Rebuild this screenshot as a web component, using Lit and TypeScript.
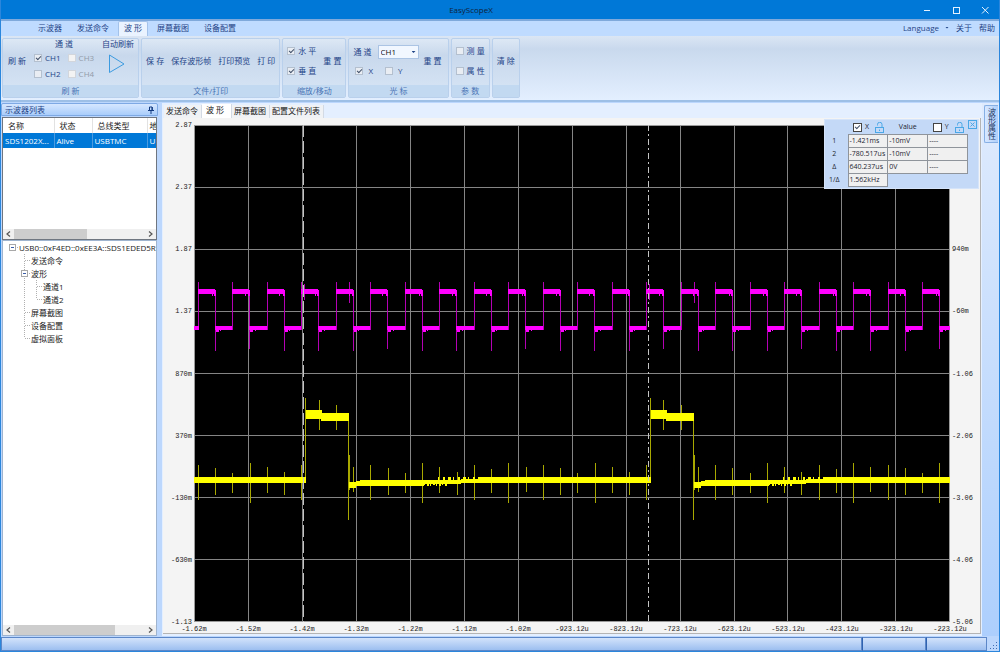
import { LitElement, html, svg, css } from "lit";
import { customElement, state } from "lit/decorators.js";
import { classMap } from "lit/directives/class-map.js";

const UI_FONT = css`"Open Sans", "Noto Sans CJK SC", sans-serif`;

const checkStyles = css`
  input[type="checkbox"] {
    appearance: none;
    flex: none;
    box-sizing: border-box;
    width: 8px;
    height: 8px;
    margin: 0;
    border: 1px solid #b4c0cf;
    background: #e9edf3;
    display: grid;
    place-items: center;
  }
  input[type="checkbox"]:checked::before {
    content: "";
    width: 4px;
    height: 2px;
    border: solid #44536b;
    border-width: 0 0 1px 1px;
    transform: translateY(-1px) rotate(-45deg);
  }
  input[type="checkbox"]:disabled {
    background: #f3f3f3;
    border-color: #d2d6dc;
  }
`;

/* ---------- Title bar ---------- */
@customElement("title-bar")
class TitleBar extends LitElement {
  static styles = css`
    :host {
      display: grid;
      grid-template-columns: 1fr auto 1fr;
      align-items: center;
      height: 19px;
      background: #0078d7;
      border-bottom: 2px solid #7fa9db;
      font: 8px/12px ${UI_FONT};
      color: #10233c;
    }
    .name {
      grid-column: 2;
      padding-right: 58px;
    }
    .buttons {
      display: flex;
      justify-content: flex-end;
      gap: 13px;
      padding-right: 6px;
    }
    button {
      display: grid;
      place-items: center;
      width: 16px;
      height: 16px;
      padding: 0;
      border: 0;
      background: none;
    }
    svg {
      width: 8px;
      height: 8px;
      fill: none;
      stroke: #e4f1fd;
    }
  `;
  render() {
    return html`
      <span class="name">EasyScopeX</span>
      <div class="buttons">
        <button aria-label="Minimize"><svg viewBox="0 0 8 8"><path d="M1 4.5h6" /></svg></button>
        <button aria-label="Maximize"><svg viewBox="0 0 8 8"><rect x="1.5" y="1.5" width="6" height="6" /></svg></button>
        <button aria-label="Close"><svg viewBox="0 0 8 8"><path d="M1 1l6.500 6.500M7.500 1L1 7.500" /></svg></button>
      </div>
    `;
  }
}

/* ---------- Ribbon ---------- */
@customElement("scope-ribbon")
class ScopeRibbon extends LitElement {
  @state() active = 2;

  static styles = [
    checkStyles,
    css`
      :host {
        display: block;
        font: 8px/12px ${UI_FONT};
        color: #1f4487;
      }
      .menu {
        display: flex;
        align-items: stretch;
        height: 15px;
        padding: 0 4px 0 31px;
        gap: 3px;
        background: #bfdbff;
      }
      button {
        font: inherit;
        color: inherit;
        border: 0;
        background: none;
        padding: 0;
        white-space: nowrap;
      }
      .menu button {
        padding: 0 6px 2px;
      }
      .menu button.active {
        background: #eaf3ff;
        border: solid #a3c2ea;
        border-width: 1px 1px 0;
        border-radius: 2px 2px 0 0;
        padding: 0 5px 2px;
      }
      .extra {
        display: flex;
        align-items: center;
        gap: 7px;
        margin-left: auto;
      }
      .menu .extra button {
        padding: 0 0 2px;
      }
      .language {
        display: flex;
        align-items: center;
        gap: 6px;
      }
      .arrow {
        width: 4px;
        height: 2px;
        background: #1f4487;
        clip-path: polygon(0 0, 100% 0, 50% 100%);
      }
      .groups {
        display: flex;
        gap: 2px;
        height: 60px;
        padding: 2px 1px;
        background: linear-gradient(#dbe6f4, #c9d9ed 20%, #e3efff);
        border-bottom: 2px solid #9dbfe6;
      }
      .group {
        display: flex;
        flex-direction: column;
        box-sizing: border-box;
        border: 1px solid #b9d0ec;
        border-radius: 2px;
        background: linear-gradient(#dde8f5, #c8d8ec 28%, #d8e6f6);
      }
      .body {
        flex: 1;
        display: flex;
        align-items: center;
        padding: 0 4px 2px;
        gap: 7px;
      }
      .refresh .body {
        gap: 8px;
        padding: 0 4px 2px 5px;
      }
      .cursor .body {
        gap: 5px;
        padding: 0 6px 2px 4px;
      }
      .caption {
        height: 12px;
        text-align: center;
        background: #c2d9f1;
        color: #4a75b5;
      }
      .stack {
        display: flex;
        flex-direction: column;
        gap: 8px;
      }
      .channels {
        align-self: flex-start;
        display: flex;
        flex-direction: column;
        align-items: center;
        gap: 3px;
      }
      .title {
        line-height: 10px;
      }
      .grid {
        display: grid;
        grid-template-columns: auto auto;
        gap: 4px 7px;
      }
      .auto {
        align-self: flex-start;
        display: flex;
        flex-direction: column;
        align-items: center;
        gap: 4px;
      }
      .auto svg {
        width: 18px;
        height: 22px;
        margin-right: 4px;
        fill: none;
        stroke: #3c9be0;
        display: block;
      }
      label {
        display: flex;
        align-items: center;
        gap: 3px;
        white-space: nowrap;
      }
      label.off {
        color: #929ba8;
      }
      .row {
        display: flex;
        align-items: center;
        gap: 12px;
        padding-left: 2px;
      }
      .row label {
        gap: 5px;
      }
      .picker {
        height: 14px;
        gap: 6px;
      }
      .cursor .stack {
        gap: 6px;
      }
      .pick {
        display: grid;
        align-items: center;
      }
      .pick > * {
        grid-area: 1 / 1;
      }
      .pick .arrow {
        justify-self: end;
        margin-right: 3px;
        pointer-events: none;
      }
      select {
        appearance: none;
        box-sizing: border-box;
        width: 41px;
        height: 14px;
        padding: 0 2px;
        border: 1px solid #abc4e4;
        background: #f1f7ff;
        color: #111;
        font: inherit;
      }
    `,
  ];

  render() {
    const tabs = ["示波器", "发送命令", "波 形", "屏幕截图", "设备配置"];
    return html`
      <nav class="menu">
        ${tabs.map(
          (t, i) => html`<button class=${classMap({ active: i === this.active })} @click=${() => (this.active = i)}>${t}</button>`
        )}
        <div class="extra">
          <button class="language">Language<span class="arrow"></span></button>
          <button>关于</button>
          <button>帮助</button>
        </div>
      </nav>
      <div class="groups">
        <section class="group refresh">
          <div class="body">
            <button>刷 新</button>
            <div class="channels">
              <span class="title">通 道</span>
              <div class="grid">
                <label><input type="checkbox" checked />CH1</label>
                <label class="off"><input type="checkbox" disabled />CH3</label>
                <label><input type="checkbox" />CH2</label>
                <label class="off"><input type="checkbox" disabled />CH4</label>
              </div>
            </div>
            <button class="auto">
              <span class="title">自动刷新</span>
              <svg viewBox="0 0 18 22"><path d="M2.500 2v17.500L17 11z" /></svg>
            </button>
          </div>
          <div class="caption">刷 新</div>
        </section>
        <section class="group">
          <div class="body">
            <button>保 存</button>
            <button>保存波形帧</button>
            <button>打印预览</button>
            <button>打 印</button>
          </div>
          <div class="caption">文件/打印</div>
        </section>
        <section class="group">
          <div class="body">
            <div class="stack">
              <label><input type="checkbox" checked />水 平</label>
              <label><input type="checkbox" checked />垂 直</label>
            </div>
            <button>重 置</button>
          </div>
          <div class="caption">缩放/移动</div>
        </section>
        <section class="group cursor">
          <div class="body">
            <div class="stack">
              <label class="picker"
                >通 道
                <span class="pick"
                  ><select>
                    <option>CH1</option>
                    <option>CH2</option></select
                  ><span class="arrow"></span></span
              ></label>
              <div class="row">
                <label><input type="checkbox" checked />X</label>
                <label><input type="checkbox" />Y</label>
              </div>
            </div>
            <button>重 置</button>
          </div>
          <div class="caption">光 标</div>
        </section>
        <section class="group">
          <div class="body">
            <div class="stack">
              <label><input type="checkbox" />测 量</label>
              <label><input type="checkbox" />属 性</label>
            </div>
          </div>
          <div class="caption">参 数</div>
        </section>
        <section class="group">
          <div class="body"><button>清 除</button></div>
          <div class="caption"></div>
        </section>
      </div>
    `;
  }
}

/* ---------- Horizontal scroll bar ---------- */
@customElement("scroll-strip")
class ScrollStrip extends LitElement {
  static properties = { share: { type: Number } };
  declare share: number;
  static styles = css`
    :host {
      display: flex;
      align-items: center;
      height: 10px;
      background: #f0f0f0;
    }
    svg {
      flex: none;
      width: 11px;
      height: 8px;
      fill: none;
      stroke: #555;
      stroke-width: 1.2;
    }
    .track {
      flex: 1;
      height: 100%;
    }
    .thumb {
      height: 100%;
      background: #cdcdcd;
    }
  `;
  render() {
    return html`
      <svg viewBox="0 0 11 8"><path d="M7 1.500L4 4l3 2.500" /></svg>
      <div class="track"><div class="thumb" style="width:${this.share}%"></div></div>
      <svg viewBox="0 0 11 8"><path d="M4 1.500L7 4l-3 2.500" /></svg>
    `;
  }
}

/* ---------- Device list and tree ---------- */
type Guide = "blank" | "pipe" | "tee" | "end" | "root" | "node";
const TREE: { guides: Guide[]; text: string }[] = [
  { guides: ["root"], text: "USB0::0xF4ED::0xEE3A::SDS1EDED5R1" },
  { guides: ["blank", "tee"], text: "发送命令" },
  { guides: ["blank", "node"], text: "波形" },
  { guides: ["blank", "pipe", "tee"], text: "通道1" },
  { guides: ["blank", "pipe", "end"], text: "通道2" },
  { guides: ["blank", "tee"], text: "屏幕截图" },
  { guides: ["blank", "tee"], text: "设备配置" },
  { guides: ["blank", "end"], text: "虚拟面板" },
];

@customElement("device-panel")
class DevicePanel extends LitElement {
  static styles = css`
    :host {
      display: flex;
      flex-direction: column;
      min-width: 0;
      font: 8px/12px ${UI_FONT};
      color: #1a1a1a;
    }
    .head {
      display: flex;
      align-items: center;
      justify-content: space-between;
      height: 11px;
      padding: 0 3px;
      border: 1px solid #7ea9e4;
      border-radius: 2px 2px 0 0;
      background: linear-gradient(#d6e7ff, #a9cdfb);
      color: #1f4487;
      line-height: 10px;
    }
    .head button {
      display: grid;
      padding: 0;
      border: 0;
      background: none;
    }
    .head svg {
      width: 6px;
      height: 8px;
      fill: none;
      stroke: #123a80;
    }
    .list {
      display: flex;
      flex-direction: column;
      height: 121px;
      margin: 1px 1px 0;
      border: 1px solid #6f7680;
      background: #fff;
    }
    .rows {
      flex: 1;
      overflow: hidden;
    }
    table {
      table-layout: fixed;
      width: 100%;
      border-collapse: collapse;
    }
    th,
    td {
      height: 15px;
      padding: 0 0 0 5px;
      text-align: left;
      font-weight: 400;
      overflow: hidden;
      white-space: nowrap;
    }
    td {
      padding-left: 2px;
      background: #0078d7;
      color: #fff;
      border-right: 1px solid #4b9be0;
    }
    th {
      border-right: 1px solid #e2e2e2;
    }
    th:last-child,
    td:last-child {
      border-right: 0;
      padding-left: 2px;
    }
    .c1 {
      width: 51px;
    }
    .c2 {
      width: 38px;
    }
    .c3 {
      width: 55px;
    }
    .tree {
      flex: 1;
      display: flex;
      flex-direction: column;
      margin: 0 1px;
      border: 1px solid #9fb4cf;
      background: #fff;
      min-height: 0;
    }
    ul {
      flex: 1;
      margin: 0;
      padding: 0 0 0 3px;
      list-style: none;
      overflow: hidden;
    }
    li {
      display: flex;
      height: 13px;
      align-items: center;
      white-space: nowrap;
    }
    li svg {
      flex: none;
      width: 12px;
      height: 13px;
      fill: none;
      stroke: #b0b0b0;
    }
    .box {
      fill: #fff;
      stroke: #a8a8a8;
    }
    .minus {
      stroke: #3b5ea8;
    }
    .dot {
      stroke-dasharray: 1 1;
    }
    .text {
      padding-left: 1px;
    }
  `;

  guide(kind: Guide) {
    const up = svg`<path class="dot" d="M6.500 0V6" />`;
    const down = svg`<path class="dot" d="M6.500 7V13" />`;
    const right = svg`<path class="dot" d="M7 6.500H12" />`;
    const toggle = svg`<rect class="box" x="3.500" y="3.500" width="6" height="6" /><path class="minus" d="M5 6.500h3" />`;
    const parts = {
      blank: [],
      pipe: [up, down],
      tee: [up, down, right],
      end: [up, right],
      root: [right, toggle],
      node: [up, down, right, toggle],
    }[kind];
    return html`<svg viewBox="0 0 12 13">${parts}</svg>`;
  }

  render() {
    return html`
      <div class="head">
        <span>示波器列表</span>
        <button aria-label="Pin"><svg viewBox="0 0 6 8"><path d="M1.500 4.500V1h2.500v3.500M4.300 1v3.500M0 4.500h6M3 4.500V8" /></svg></button>
      </div>
      <div class="list">
        <div class="rows">
          <table>
            <colgroup>
              <col class="c1" />
              <col class="c2" />
              <col class="c3" />
              <col />
            </colgroup>
            <thead>
              <tr><th>名称</th><th>状态</th><th>总线类型</th><th>地</th></tr>
            </thead>
            <tbody>
              <tr><td>SDS1202X...</td><td>Alive</td><td>USBTMC</td><td>U</td></tr>
            </tbody>
          </table>
        </div>
        <scroll-strip .share=${56}></scroll-strip>
      </div>
      <div class="tree">
        <ul>
          ${TREE.map((r) => html`<li>${r.guides.map((g) => this.guide(g))}<span class="text">${r.text}</span></li>`)}
        </ul>
        <scroll-strip .share=${77}></scroll-strip>
      </div>
    `;
  }
}

/* ---------- Cursor read-out ---------- */
@customElement("cursor-readout")
class CursorReadout extends LitElement {
  static styles = [
    checkStyles,
    css`
      :host {
        display: flex;
        align-items: flex-start;
        box-sizing: border-box;
        background: #c4d9f7;
        border: 1px solid #d5e4fa;
        font: 7px/10px ${UI_FONT};
        color: #1c2430;
      }
      table {
        border-collapse: collapse;
        table-layout: fixed;
        width: 143px;
      }
      .c0 {
        width: 23px;
      }
      th,
      td {
        padding: 0;
        height: 12px;
        font-weight: 400;
      }
      thead th {
        height: 14px;
      }
      tbody th {
        padding-right: 4px;
      }
      td {
        border: 1px solid #8f949b;
        background: #f0f0f0;
        padding-left: 1px;
        white-space: nowrap;
      }
      td.none {
        border: 0;
        background: none;
      }
      label {
        display: flex;
        align-items: center;
        gap: 3px;
        padding-left: 5px;
      }
      input[type="checkbox"] {
        width: 9px;
        height: 9px;
        background: #fff;
        border-color: #444;
      }
      .lock {
        width: 9px;
        height: 11px;
        margin-left: 3px;
        fill: none;
        stroke: #4aa7e6;
      }
      button {
        display: grid;
        padding: 0;
        border: 0;
        background: none;
      }
      .close {
        width: 9px;
        height: 9px;
        fill: none;
        stroke: #4aa7e6;
      }
    `,
  ];
  lock() {
    return html`<svg class="lock" viewBox="0 0 9 11"><rect x=".5" y="5.500" width="8" height="5" /><path d="M2.500 3.500V2.500a2 2 0 0 1 4.500 0V5.500M4.500 7.500v1.500" /></svg>`;
  }
  render() {
    const rows = [
      ["1", "-1.421ms", "-10mV", "----"],
      ["2", "-780.517us", "-10mV", "----"],
      ["Δ", "640.237us", "0V", "----"],
      ["1/Δ", "1.562kHz", "", ""],
    ];
    return html`
      <table>
        <colgroup><col class="c0" /><col /><col /><col /></colgroup>
        <thead>
          <tr>
            <th></th>
            <th><label><input type="checkbox" checked />X${this.lock()}</label></th>
            <th>Value</th>
            <th><label><input type="checkbox" />Y${this.lock()}</label></th>
          </tr>
        </thead>
        <tbody>
          ${rows.map(
            ([h, ...cells]) => html`<tr><th>${h}</th>${cells.map((c) => html`<td class=${classMap({ none: !c })}>${c}</td>`)}</tr>`
          )}
        </tbody>
      </table>
      <button aria-label="Close">
        <svg class="close" viewBox="0 0 9 9"><rect x=".5" y=".5" width="8" height="8" /><path d="M2.500 2.500l4 4M6.500 2.500l-4 4" /></svg>
      </button>
    `;
  }
}

/* ---------- Oscilloscope chart ---------- */
// Drawing area of the trace canvas.
const X0 = 194;
const X1 = 950;
const Y0 = 125;
const Y1 = 622;

const LEFT_AXIS = ["2.87", "2.37", "1.87", "1.37", "870m", "370m", "-130m", "-630m", "-1.13"];
const RIGHT_AXIS = ["", "", "940m", "-60m", "-1.06", "-2.06", "-3.06", "-4.06", "-5.06"];
const TIME_AXIS = [
  "-1.62m", "-1.52m", "-1.42m", "-1.32m", "-1.22m", "-1.12m", "-1.02m", "-923.12u",
  "-823.12u", "-723.12u", "-623.12u", "-523.12u", "-423.12u", "-323.12u", "-223.12u",
];

@customElement("scope-chart")
class ScopeChart extends LitElement {
  static styles = css`
    :host {
      display: grid;
      grid-template-columns: 31px minmax(0, 1fr) 30px;
      grid-template-rows: minmax(0, 1fr) 11px;
      padding-top: 7px;
      background: #f4f4f4;
      border: 1px solid #b4b4b4;
      border-width: 0 1px 1px 0;
      font: 7px/10px "Liberation Mono", monospace;
      color: #222;
    }
    .plot {
      display: block;
      width: 100%;
      height: 100%;
      background: #000;
    }
    .yaxis {
      display: flex;
      flex-direction: column;
      justify-content: space-between;
      margin: -5px 0;
      padding: 0 2px;
    }
    .yaxis.left {
      text-align: right;
    }
    .yaxis span {
      height: 10px;
    }
    .xaxis {
      grid-column: 2;
      display: flex;
      justify-content: space-between;
      padding-top: 2px;
    }
    .xaxis span {
      display: flex;
      justify-content: center;
      width: 0;
    }
    .grid {
      stroke: #858585;
    }
    .frame {
      stroke: #9a9a9a;
      fill: none;
    }
    .magenta {
      fill: #ff00ff;
    }
    .magenta-thin {
      stroke: #b400b4;
      fill: none;
    }
    .yellow {
      fill: #ffff00;
    }
    .yellow-thin {
      stroke: #a8a800;
      fill: none;
    }
    .cursor {
      stroke: #c4c4c4;
    }
    .long {
      stroke-dasharray: 12 4;
    }
    .dashdot {
      stroke-dasharray: 6 3 2 3;
    }
  `;

  magenta() {
    const fills: string[] = [];
    const lines: string[] = [];
    const rect = (x: number, y: number, w: number, h: number) => fills.push(`M${x} ${y}h${w}v${h}h${-w}z`);
    rect(X0, 326, 5, 4);
    for (let i = 0; i < 22; i++) {
      const rise = Math.round(198 + i * 34.476);
      const fall = Math.round(215 + i * 34.476);
      const next = Math.min(Math.round(198 + (i + 1) * 34.476), X1);
      lines.push(`M${rise + 0.5} 282V330M${fall + 0.5} 291V${i % 4 === 1 ? 349 : 351}`);
      rect(rise, 289, fall - rise, 5);
      rect(fall - 3 - (i % 3), 293, 1, 3);
      rect(fall - 1, 290, 2, 6);
      rect(fall, 326, next - fall, 4);
      rect(fall + 1, 329, 3, 3);
      rect(fall + 5 + (i % 2), 329, 1, 2);
      if (i === 3 || i === 13) lines.push(`M${rise + 3.5} 284V300`);
      if (i === 4 || i === 14) lines.push(`M${rise + 13.5} 282V303`);
    }
    return svg`<path class="magenta-thin" d=${lines.join("")} /><path class="magenta" d=${fills.join("")} />`;
  }

  yellow() {
    const fills: string[] = [];
    const lines: string[] = [];
    const rect = (x: number, y: number, w: number, h: number) => fills.push(`M${x} ${y}h${w}v${h}h${-w}z`);
    rect(X0, 477, 112, 6);
    for (const x of [306, 651]) {
      const end = x === 306 ? 650 : X1;
      lines.push(`M${x - 0.5} 398V483M${x + 42.500} 415V520M${x + 43.500} 455V490`);
      rect(x, 410, 16, 9);
      rect(x + 15, 413, 28, 8);
      rect(x + 20, 419, 3, 2);
      rect(x + 43, 482, 7, 6);
      rect(x + 50, 481, 5, 5);
      rect(x + 54, 480, 64, 6);
      rect(x + 117, 480, 38, 4);
      for (let k = 0; k < 8; k++) rect(x + 118 + k * 3, 483, 1 + (k % 2), k % 3 ? 3 : 2);
      for (let k = 0; k < 10; k++) rect(x + 132 + k * 5, 477, 1 + (k % 3), 4);
      rect(x + 155, 479, 40, 4);
      rect(x + 172, 477, 20, 4);
      rect(x + 190, 477, end - x - 189, 6);
    }
    // Crosstalk spikes, one for every edge of the other channel.
    const tops = [465, 468, 473, 463, 467, 472, 465, 469, 463, 467];
    const feet = [500, 495, 493, 503, 493, 495, 500, 493, 503, 492];
    for (let i = 0; i < 44; i++) {
      const x = Math.round(198 + i * 17.24);
      const onPulse = (x > 306 && x < 348) || (x > 651 && x < 693);
      const t = i % 10;
      if (onPulse) lines.push(`M${x + 0.5} ${i % 2 ? 400 : 405}V${430}`);
      else lines.push(`M${x + 0.5} ${tops[t]}V${feet[t]}`);
    }
    return svg`<path class="yellow-thin" d=${lines.join("")} /><path class="yellow" d=${fills.join("")} />`;
  }

  render() {
    const columns = Array.from({ length: 13 }, (_, i) => Math.round(X0 + (i + 1) * 53.95) + 0.5);
    const rows = Array.from({ length: 7 }, (_, i) => Math.floor(Y0 + (i + 1) * 62.1) + 0.5);
    return html`
      <div class="yaxis left">${LEFT_AXIS.map((t) => html`<span>${t}</span>`)}</div>
      <svg class="plot" viewBox="${X0} ${Y0} ${X1 - X0} ${Y1 - Y0}" preserveAspectRatio="none">
        <g class="grid">
          ${columns.map((x) => svg`<path d="M${x} ${Y0}V${Y1}" />`)}
          ${rows.map((y) => svg`<path d="M${X0} ${y}H${X1}" />`)}
        </g>
        <rect class="frame" x=${X0 + 0.5} y=${Y0 + 0.5} width=${X1 - X0 - 1} height=${Y1 - Y0 - 1} />
        ${this.magenta()}${this.yellow()}
        <path class="cursor long" d="M303.500 125V622" />
        <path class="cursor dashdot" d="M648.500 125V622" />
      </svg>
      <div class="yaxis">${RIGHT_AXIS.map((t) => html`<span>${t}</span>`)}</div>
      <div class="xaxis">${TIME_AXIS.map((t) => html`<span>${t}</span>`)}</div>
    `;
  }
}

/* ---------- Application window ---------- */
@customElement("app-root")
class AppRoot extends LitElement {
  @state() page = 1;

  static styles = css`
    :host {
      display: flex;
      flex-direction: column;
      box-sizing: border-box;
      height: 100vh;
      overflow: hidden;
      background: #bcd7fd;
      border: solid #2b86dc;
      border-width: 0 1px 1px;
      font: 8px/12px ${UI_FONT};
    }
    .work {
      flex: 1;
      min-height: 0;
      display: grid;
      grid-template-columns: 157px minmax(0, 1fr) 17px;
      grid-template-rows: minmax(0, 1fr);
      column-gap: 4px;
      padding-top: 1px;
    }
    .main {
      display: flex;
      flex-direction: column;
      min-width: 0;
      margin-right: -4px;
      padding: 1px 1px 2px;
      background: #e4efff;
      position: relative;
    }
    .tabs {
      display: flex;
      align-items: flex-end;
      height: 14px;
      padding-left: 1px;
    }
    .tabs button {
      height: 13px;
      padding: 0 3px 2px 2px;
      border: 0;
      border-right: 1px solid #d3dae4;
      background: #f0f2f5;
      color: #161616;
      font: inherit;
      line-height: 11px;
      white-space: nowrap;
    }
    .tabs button.active {
      height: 14px;
      padding: 0 7px 3px 4px;
      background: #fff;
    }
    scope-chart {
      flex: 1;
      min-height: 0;
    }
    cursor-readout {
      position: absolute;
      top: 16px;
      right: 3px;
      width: 155px;
      height: 70px;
    }
    .side {
      padding: 2px 0 0 2px;
      background: linear-gradient(#dfebfd, #adcffd);
    }
    .side button {
      width: 14px;
      height: 38px;
      padding: 0;
      border: 1px solid #86afe4;
      border-right: 0;
      border-radius: 2px 0 0 2px;
      background: linear-gradient(90deg, #d8e8ff, #aecffb);
      color: #1c355f;
      font: 8px/12px ${UI_FONT};
      writing-mode: vertical-rl;
      text-orientation: upright;
    }
    .status {
      display: grid;
      grid-template-columns: 1fr 64px 61px 12px;
      height: 14px;
      margin-top: 1px;
    }
    .cell {
      border: 1px solid #5c87c8;
      background: linear-gradient(#d3e3fb, #9dbff0);
    }
    .cell + .cell {
      border-left-color: #2f62b0;
    }
    .grip {
      align-self: end;
      justify-self: end;
      width: 9px;
      height: 9px;
      fill: #3f6cb4;
    }
  `;

  render() {
    const pages = ["发送命令", "波 形", "屏幕截图", "配置文件列表"];
    return html`
      <title-bar></title-bar>
      <scope-ribbon></scope-ribbon>
      <div class="work">
        <device-panel></device-panel>
        <main class="main">
          <div class="tabs">
            ${pages.map(
              (t, i) => html`<button class=${classMap({ active: i === this.page })} @click=${() => (this.page = i)}>${t}</button>`
            )}
          </div>
          <scope-chart></scope-chart>
          <cursor-readout></cursor-readout>
        </main>
        <aside class="side"><button>波形属性</button></aside>
      </div>
      <footer class="status">
        <div class="cell"></div>
        <div class="cell"></div>
        <div class="cell"></div>
        <svg class="grip" viewBox="0 0 9 9">
          <path d="M6 0h1v1h-1zM6 3h1v1h-1zM3 3h1v1h-1zM6 6h1v1h-1zM3 6h1v1h-1zM0 6h1v1h-1z" />
        </svg>
      </footer>
    `;
  }
}
